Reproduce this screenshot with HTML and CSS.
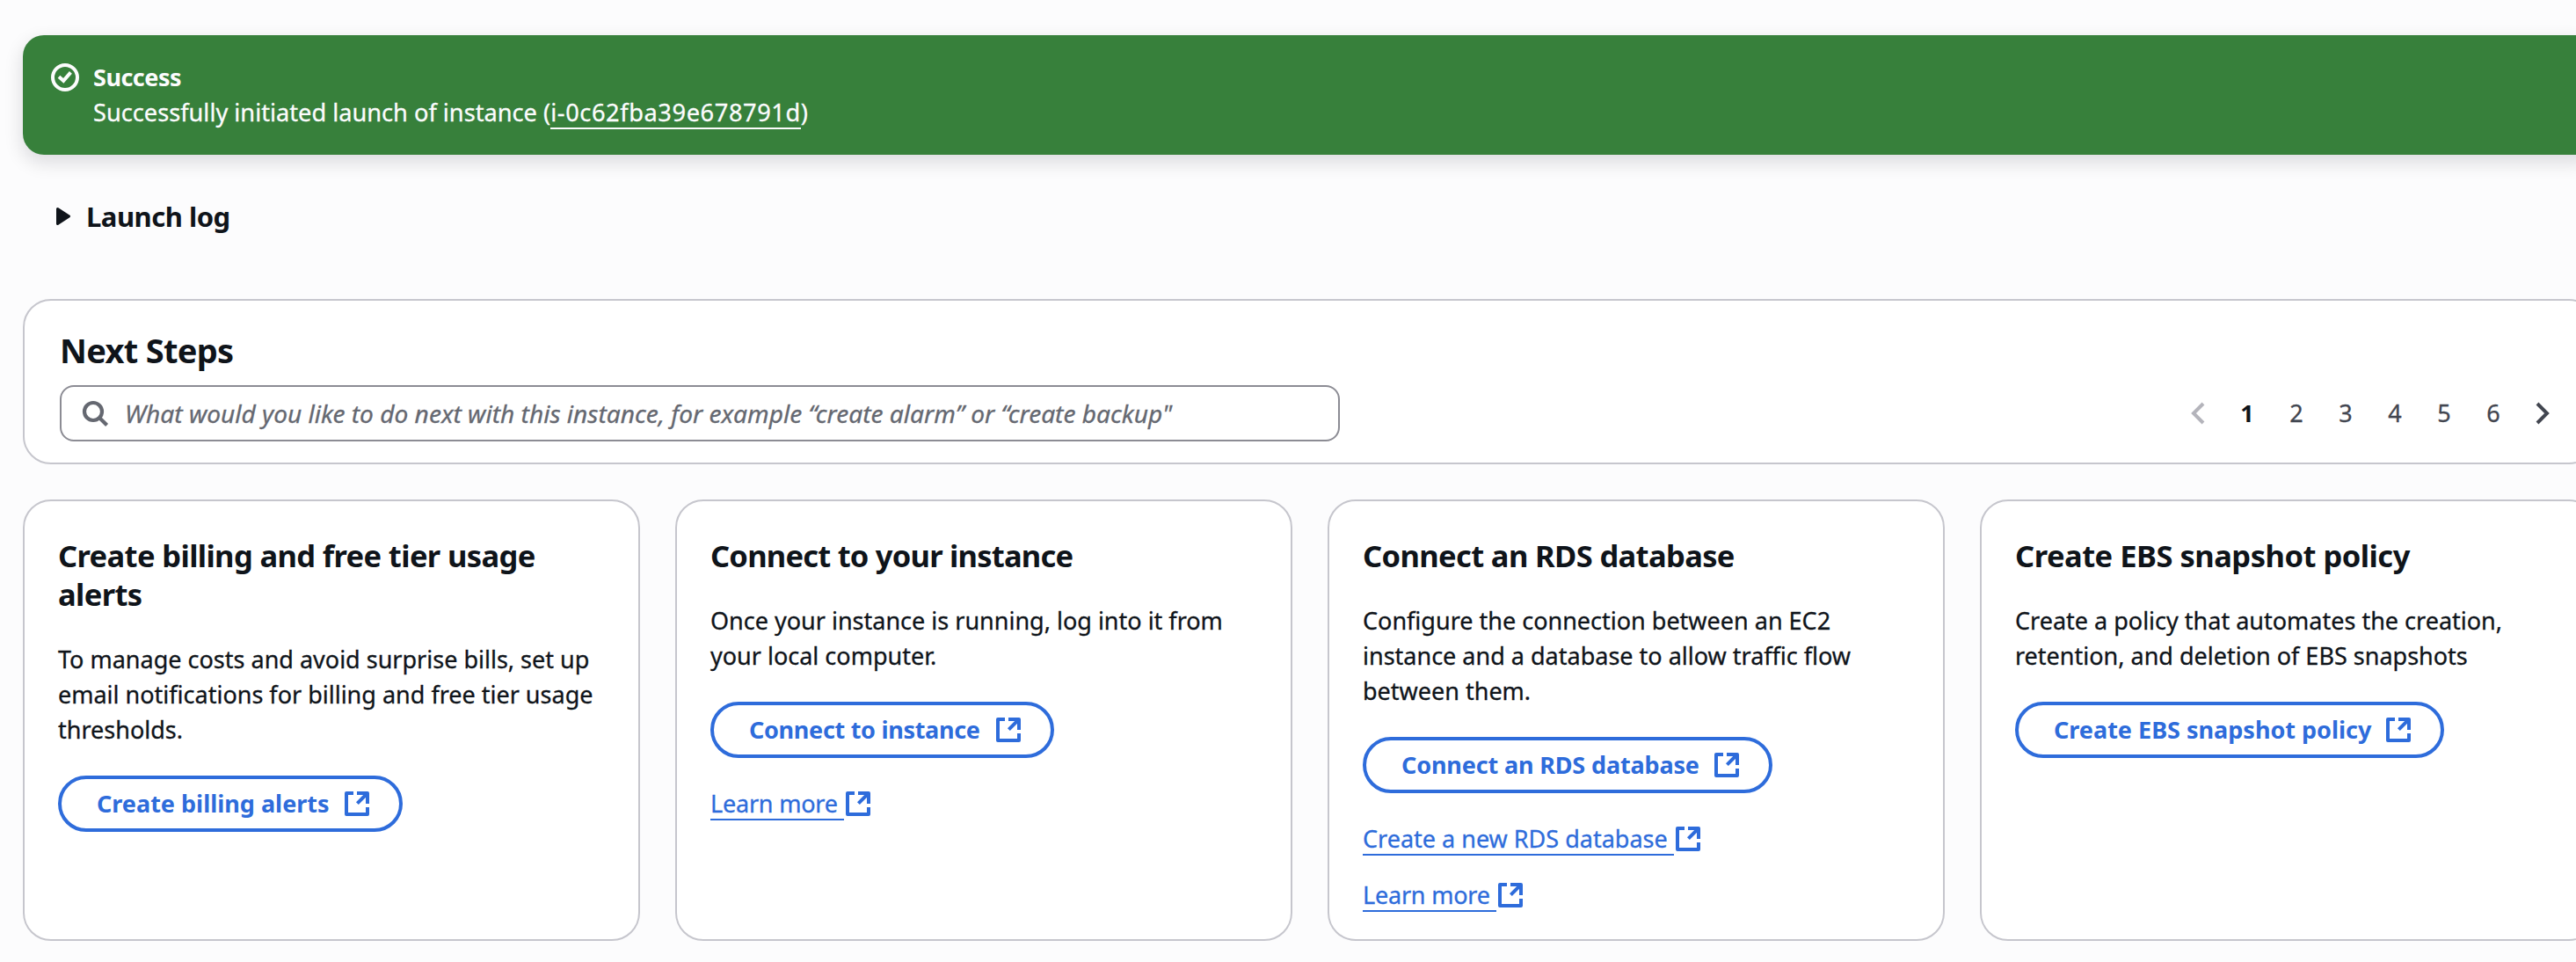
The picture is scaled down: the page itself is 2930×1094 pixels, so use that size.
FILE: index.html
```html
<!DOCTYPE html>
<html lang="en">
<head>
<meta charset="utf-8">
<title>Launch an instance</title>
<link rel="stylesheet" href="styles.css">
</head>
<body>
<svg class="sprite" width="0" height="0" aria-hidden="true">
  <symbol id="external" viewBox="0 0 32 32"><path d="M12 4H4V28H28V20M16 4H28V16M28 4L16.4 15.6"/></symbol>
</svg>
<main class="page">
  <section class="flash">
    <svg class="icon" viewBox="0 0 32 32"><circle cx="16" cy="16" r="14"/><path d="M9 15.2L14.2 19.8L22.4 10.4"/></svg>
    <div class="flash-text">
      <div class="flash-title">Success</div>
      <div class="flash-message">Successfully initiated launch of instance (<a class="flash-link" href="#">i-0c62fba39e678791d</a>)</div>
    </div>
  </section>

  <section class="log">
    <svg class="caret" viewBox="0 0 16 20"><path d="M1.5 1.5L14.5 10L1.5 18.5Z"/></svg>
    <span class="log-title">Launch log</span>
  </section>

  <section class="panel">
    <h2 class="panel-title">Next Steps</h2>
    <div class="panel-row">
      <div class="search">
        <svg class="icon" viewBox="0 0 32 32"><circle cx="14" cy="14" r="10"/><path d="M21 21L29.6 29.6"/></svg>
        <span class="placeholder">What would you like to do next with this instance, for example “create alarm” or “create backup"</span>
      </div>
      <nav class="pages">
        <span class="page-item disabled"><svg class="icon" viewBox="0 0 32 32"><path d="M22 5L11 16L22 27"/></svg></span>
        <span class="page-item current">1</span>
        <span class="page-item">2</span>
        <span class="page-item">3</span>
        <span class="page-item">4</span>
        <span class="page-item">5</span>
        <span class="page-item">6</span>
        <span class="page-item"><svg class="icon" viewBox="0 0 32 32"><path d="M10 5L21 16L10 27"/></svg></span>
      </nav>
    </div>
  </section>

  <section class="cards">
    <article class="card">
      <h3 class="card-title">Create billing and free tier usage<br>alerts</h3>
      <p class="card-text">To manage costs and avoid surprise bills, set up<br>email notifications for billing and free tier usage<br>thresholds.</p>
      <a class="button billing" href="#">Create billing alerts<svg class="icon"><use href="#external"/></svg></a>
    </article>
    <article class="card">
      <h3 class="card-title tight">Connect to your instance</h3>
      <p class="card-text">Once your instance is running, log into it from<br>your local computer.</p>
      <a class="button connect" href="#">Connect to instance<svg class="icon"><use href="#external"/></svg></a>
      <div class="links">
        <a class="link" href="#"><span class="link-text short">Learn more&nbsp;</span><svg class="icon"><use href="#external"/></svg></a>
      </div>
    </article>
    <article class="card">
      <h3 class="card-title">Connect an RDS database</h3>
      <p class="card-text">Configure the connection between an EC2<br>instance and a database to allow traffic flow<br>between them.</p>
      <a class="button database" href="#">Connect an RDS database<svg class="icon"><use href="#external"/></svg></a>
      <div class="links">
        <a class="link" href="#"><span class="link-text">Create a new RDS database&nbsp;</span><svg class="icon"><use href="#external"/></svg></a>
        <a class="link" href="#"><span class="link-text short">Learn more&nbsp;</span><svg class="icon"><use href="#external"/></svg></a>
      </div>
    </article>
    <article class="card">
      <h3 class="card-title wide">Create EBS snapshot policy</h3>
      <p class="card-text">Create a policy that automates the creation,<br>retention, and deletion of EBS snapshots</p>
      <a class="button snapshot" href="#">Create EBS snapshot policy<svg class="icon"><use href="#external"/></svg></a>
    </article>
  </section>
</main>
</body>
</html>
```
FILE: styles.css
```css
* { box-sizing: border-box; }

body {
  margin: 0;
  height: 1094px;
  overflow: hidden;
  background: #fcfcfd;
  color: #0f141a;
  font: 400 27px/40px "Noto Sans", "Open Sans", sans-serif;
  -webkit-text-stroke: 0.3px;
}

h2, h3, p { margin: 0; }
a { color: inherit; text-decoration: none; }

.page { width: 2928px; margin-left: 26px; padding-top: 40px; }

.sprite { display: block; }

.icon {
  flex: none;
  width: 32px;
  height: 32px;
  fill: none;
  stroke: currentColor;
  stroke-width: 4;
}

/* Success message */
.flash {
  display: flex;
  gap: 16px;
  height: 136px;
  padding: 28px 32px;
  border-radius: 24px;
  background: #37803b;
  color: #fcfcfd;
  box-shadow: 0 8px 20px 2px rgba(0, 7, 22, 0.12);
}
.flash .icon { margin-top: 4px; }
.flash-title { font-weight: 700; letter-spacing: -0.5px; }
.flash-message { font-size: 27.2px; white-space: nowrap; }
.flash-link { display: inline-block; height: 39px; letter-spacing: 0.6px; border-bottom: 2px solid #fcfcfd; vertical-align: top; }

/* Launch log */
.log { display: flex; align-items: center; gap: 18px; height: 40px; margin-top: 50px; padding-left: 38px; }
.caret { width: 16px; height: 20px; fill: #0f141a; stroke: #0f141a; stroke-width: 3; stroke-linejoin: round; }
.log-title { font-size: 31px; font-weight: 700; letter-spacing: -0.5px; }

/* Next steps */
.panel {
  height: 188px;
  margin-top: 74px;
  padding: 32px 32px 24px 40px;
  border: 2px solid #c6c6cd;
  border-radius: 32px;
  background: #fff;
}
.panel-title { font-size: 38px; font-weight: 700; line-height: 48px; letter-spacing: -0.7px; }
.panel-row { display: flex; justify-content: space-between; height: 64px; margin-top: 16px; }
.search {
  display: flex;
  align-items: center;
  gap: 18px;
  width: 1456px;
  padding-left: 22px;
  border: 2px solid #8c8c94;
  border-radius: 16px;
  color: #656871;
}
.search .icon { stroke-width: 4.2; }
.placeholder { font-size: 28.1px; font-style: italic; white-space: nowrap; }
.pages { display: flex; align-items: center; }
.page-item { display: flex; justify-content: center; width: 56px; color: #424650; }
.current { font-weight: 700; color: #0f141a; }
.disabled { color: #b4b4bb; }

/* Cards */
.cards { display: grid; grid-template-columns: repeat(4, 702px); gap: 40px; height: 502px; margin-top: 40px; }
.card {
  padding: 40px 38px 0;
  border: 2px solid #c6c6cd;
  border-radius: 32px;
  background: #fff;
  white-space: nowrap;
}
.card-title { font-size: 34.5px; font-weight: 700; line-height: 44px; letter-spacing: -0.63px; }
.tight { letter-spacing: -0.78px; }
.wide { letter-spacing: -0.5px; }
.card-text { margin-top: 32px; }

.button {
  display: flex;
  align-items: center;
  justify-content: space-between;
  height: 64px;
  margin-top: 32px;
  padding: 0 32px 0 40px;
  border: 4px solid #2e6cdb;
  border-radius: 32px;
  color: #2e6cdb;
  font-weight: 700;
  -webkit-text-stroke: 0;
}
.billing { width: 392px; }
.connect { width: 391px; letter-spacing: -0.3px; }
.database { width: 466px; letter-spacing: -0.15px; }
.snapshot { width: 488px; }
.flash-title, .log-title, .panel-title, .card-title, .current { -webkit-text-stroke: 0; }

.links { display: grid; gap: 24px; margin-top: 32px; color: #2e6cdb; }
.link { display: flex; align-items: center; justify-self: start; height: 40px; }
.link-text { align-self: flex-start; height: 39px; border-bottom: 2px solid #2e6cdb; }
.short { letter-spacing: -0.2px; }
.button .icon, .link .icon { stroke-linejoin: round; }
```
